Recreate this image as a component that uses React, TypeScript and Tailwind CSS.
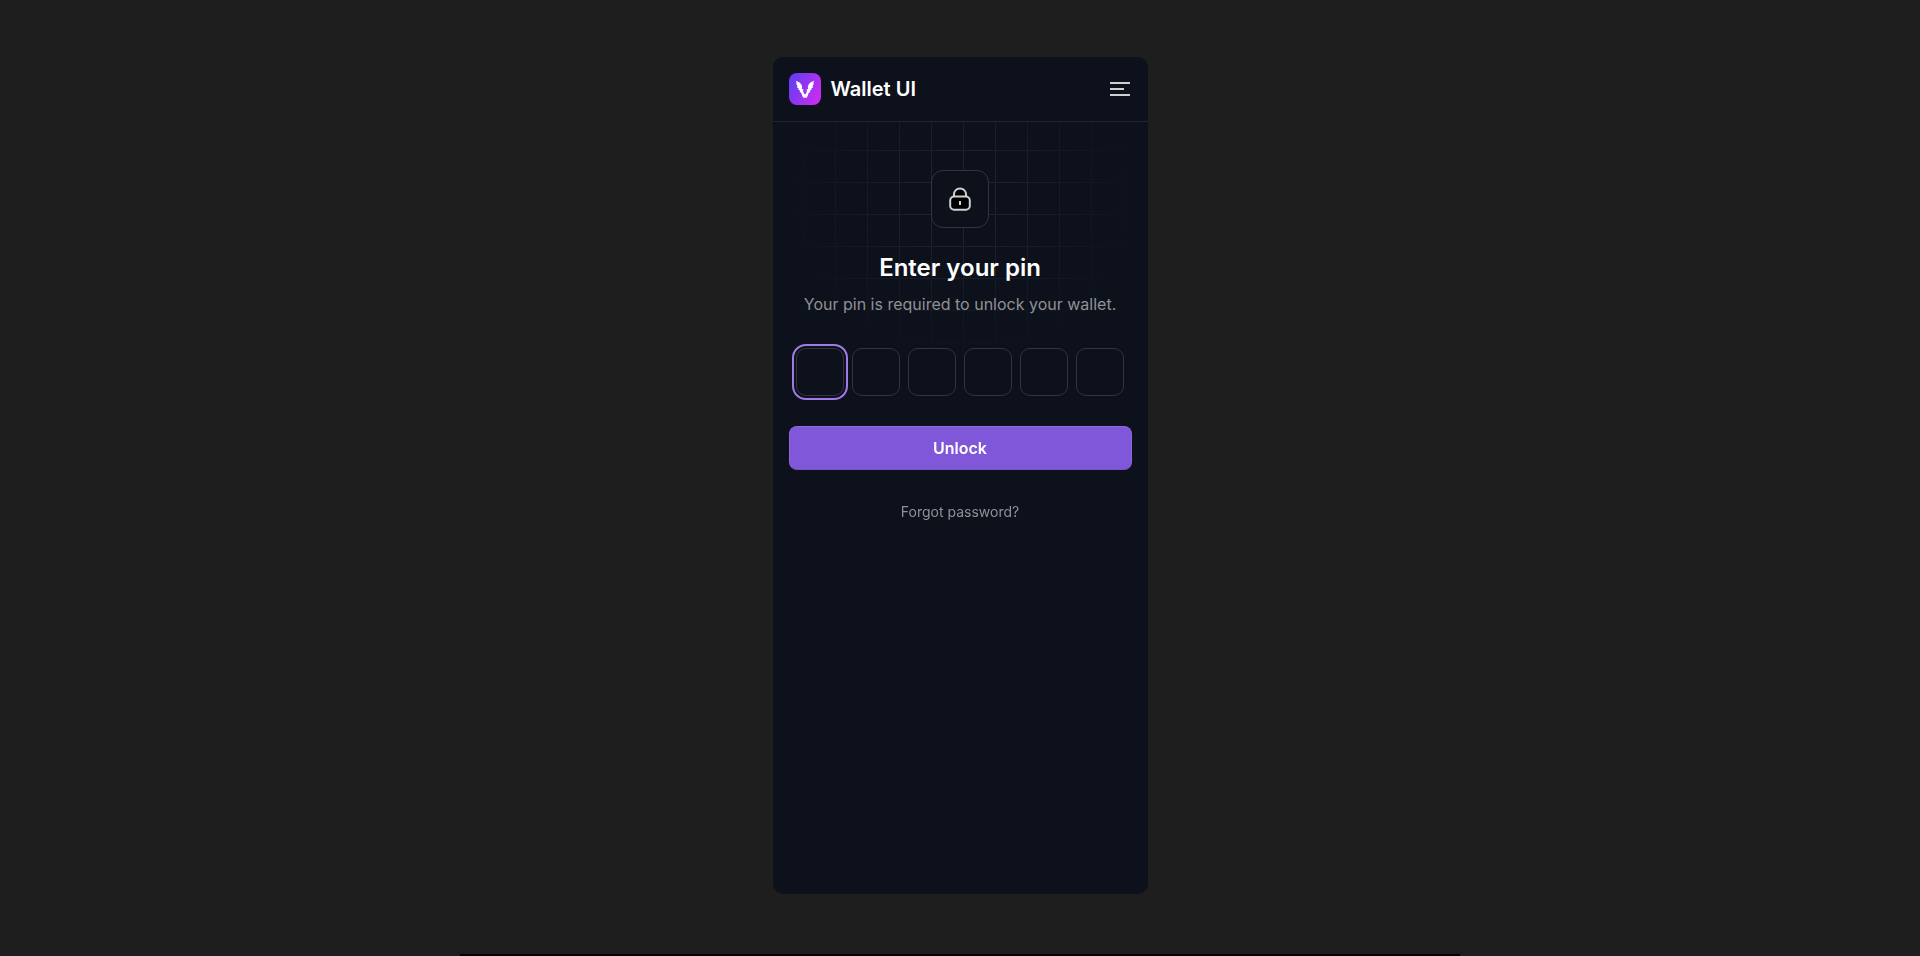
import { useRef, useState } from "react";

const PIN_LENGTH = 6;

function Logo() {
  return (
    <svg className="size-8" viewBox="0 0 32 32" aria-hidden="true">
      <defs>
        <linearGradient id="logo-bg" x1="0" y1="8" x2="32" y2="24" gradientUnits="userSpaceOnUse">
          <stop offset="0.1" stopColor="#6d3cf0" />
          <stop offset="0.95" stopColor="#c82cf0" />
        </linearGradient>
      </defs>
      <rect width="32" height="32" rx="8" fill="url(#logo-bg)" />
      <path
        fill="#fff"
        d="M6.8 7.8 L10.6 9.4 L12.4 11.6 L13.2 14 L12.8 16 L14.6 16.6 L14 18 L15.2 21 H16.8 L18 18 L17.4 16.6 L19.2 16 L18.8 14 L19.6 11.6 L21.4 9.4 L25.2 7.8 L24.2 10.4 L25 10.8 L23.6 12.8 L24 14.4 L22.4 15.2 L22.6 16.8 L20.8 17.6 L21.4 18.6 L19.4 20.4 L18.6 23.2 L17.4 24.8 H14.6 L13.4 23.2 L12.6 20.4 L10.6 18.6 L11.2 17.6 L9.4 16.8 L9.6 15.2 L8 14.4 L8.4 12.8 L7 10.8 L7.8 10.4 Z"
      />
    </svg>
  );
}

function LockIcon() {
  return (
    <svg className="size-7" viewBox="0 0 28 28" fill="#000" stroke="#d0d1d3" strokeWidth="2" aria-hidden="true">
      <path d="M8 12V9.4a6 6 0 0 1 12 0v2.6" />
      <rect x="4.2" y="11.6" width="19.6" height="13.2" rx="4" />
      <path d="M14 16v4" />
    </svg>
  );
}

function Header() {
  return (
    <header className="flex items-center justify-between border-b border-[#22252f] p-4">
      <div className="flex items-center gap-2.5">
        <Logo />
        <h1 className="text-xl leading-8 font-semibold text-white">Wallet UI</h1>
      </div>
      <button type="button" aria-label="Menu" className="flex flex-col gap-1 p-0.5">
        <span className="h-0.5 w-5 bg-[#cecfd1]" />
        <span className="h-0.5 w-3.5 bg-[#cecfd1]" />
        <span className="h-0.5 w-5 bg-[#cecfd1]" />
      </button>
    </header>
  );
}

function PinInput() {
  const [pin, setPin] = useState<string[]>(Array(PIN_LENGTH).fill(""));
  const inputs = useRef<(HTMLInputElement | null)[]>([]);

  const handleChange = (index: number, value: string) => {
    const digit = value.replace(/\D/g, "").slice(-1);
    setPin((prev) => prev.map((d, i) => (i === index ? digit : d)));
    if (digit && index < PIN_LENGTH - 1) {
      inputs.current[index + 1]?.focus();
    }
  };

  return (
    <div className="mt-8 flex justify-center gap-2">
      {pin.map((digit, index) => (
        <input
          key={index}
          ref={(el) => {
            inputs.current[index] = el;
          }}
          type="password"
          inputMode="numeric"
          autoFocus={index === 0}
          aria-label={`Pin digit ${index + 1}`}
          value={digit}
          onChange={(e) => handleChange(index, e.target.value)}
          className="size-12 rounded-[10px] border border-[#32353f] bg-[#0d111c] text-center text-lg text-white caret-transparent outline-offset-2 outline-[#9f7aea] focus:outline-2"
        />
      ))}
    </div>
  );
}

export default function App() {
  return (
    <div className="flex min-h-screen flex-col items-center bg-[#1e1e1e] font-['Inter',sans-serif]">
      <div className="mt-[57px] mb-[60px] flex w-full max-w-[375px] flex-1 flex-col overflow-hidden rounded-[10px] bg-[#0d111c]">
        <Header />
        <main className="relative flex-1 px-4 pt-12">
          <svg
            className="absolute inset-x-0 top-0 h-64 w-full [mask-image:radial-gradient(182px_170px_at_50%_78px,white,transparent)]"
            aria-hidden="true"
          >
            <defs>
              <pattern id="grid" x="30" y="28" width="32" height="32" patternUnits="userSpaceOnUse">
                <path d="M0.5 32V0.5H32" fill="none" stroke="#252832" />
              </pattern>
            </defs>
            <rect width="100%" height="100%" fill="url(#grid)" />
          </svg>
          <div className="relative">
            <div className="mx-auto flex size-[58px] items-center justify-center rounded-xl border border-[#32353f] bg-[#0d111c]">
              <LockIcon />
            </div>
            <h2 className="mt-6 text-center text-2xl font-semibold text-white">Enter your pin</h2>
            <p className="mt-2 text-center text-base text-[#8f9195]">
              Your pin is required to unlock your wallet.
            </p>
            <form onSubmit={(e) => e.preventDefault()}>
              <PinInput />
              <button
                type="submit"
                className="mt-[30px] h-11 w-full rounded-lg border border-[#8d6ada] border-b-[#7454bf] bg-[#8057d9] text-base font-semibold text-white"
              >
                Unlock
              </button>
            </form>
            <a href="#" className="mx-auto mt-8 block w-fit text-sm text-[#8f9195]">
              Forgot password?
            </a>
          </div>
        </main>
      </div>
      <div className="h-0.5 w-full max-w-[1000px] bg-black" />
    </div>
  );
}
